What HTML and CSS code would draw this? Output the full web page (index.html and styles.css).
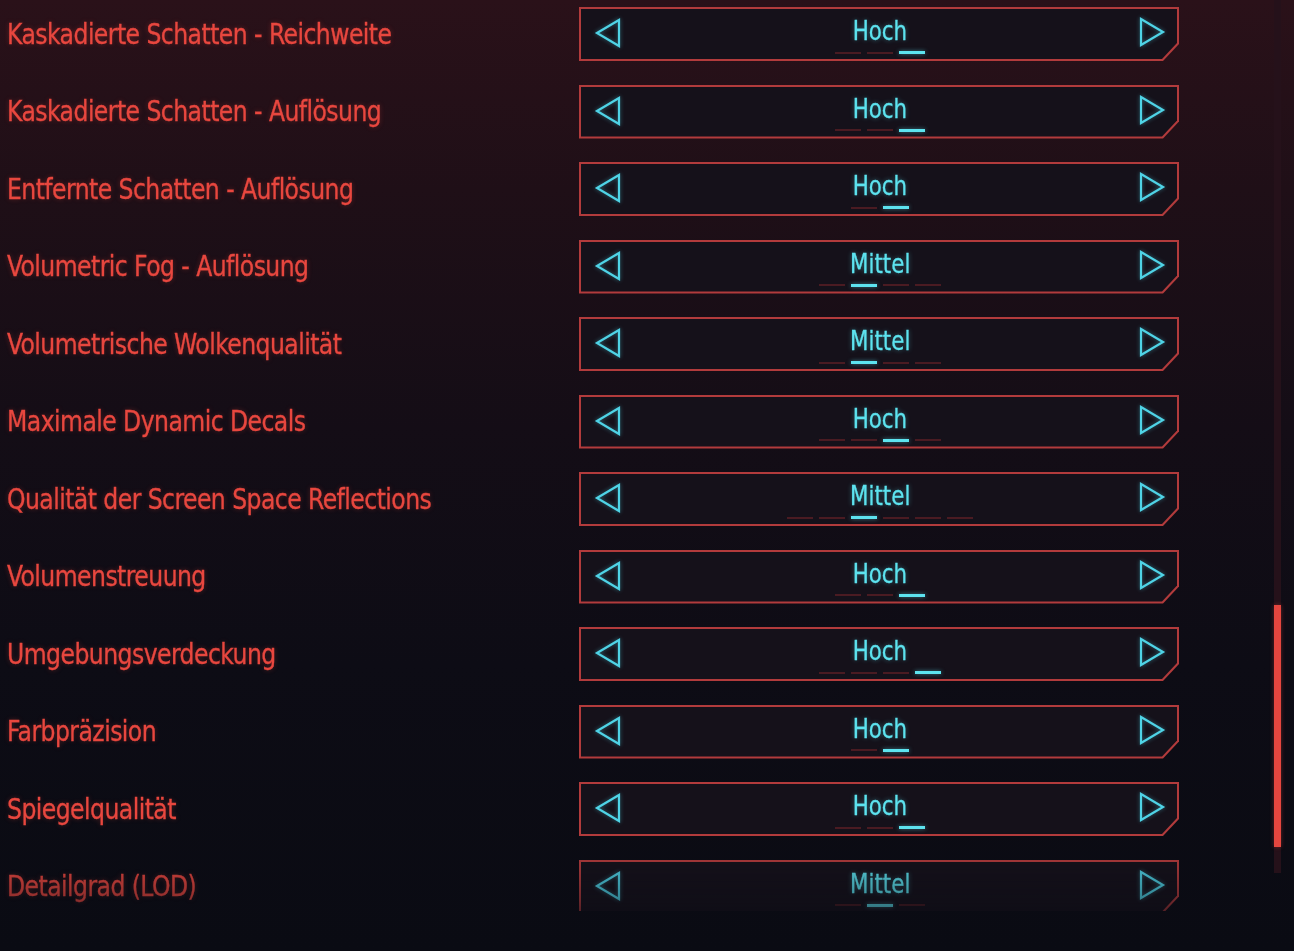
FILE: index.html
```html
<!DOCTYPE html>
<html lang="de">
<head>
<meta charset="utf-8">
<title>Grafik-Einstellungen</title>
<link rel="stylesheet" href="styles.css">
</head>
<body>
<div class="page">
  <div class="list">
    <div class="row"><div class="label"><span>Kaskadierte Schatten - Reichweite</span></div>
      <div class="sel"><div class="sel-inner">
        <svg class="arrow" viewBox="0 0 28 30"><polygon points="3,15 25,2 25,28"/></svg>
        <div class="val"><span class="txt">Hoch</span><div class="ind"><i></i><i></i><i class="on"></i></div></div>
        <svg class="arrow" viewBox="0 0 28 30"><polygon points="3,2 25,15 3,28"/></svg>
      </div></div></div>
    <div class="row"><div class="label"><span>Kaskadierte Schatten - Auflösung</span></div>
      <div class="sel"><div class="sel-inner">
        <svg class="arrow" viewBox="0 0 28 30"><polygon points="3,15 25,2 25,28"/></svg>
        <div class="val"><span class="txt">Hoch</span><div class="ind"><i></i><i></i><i class="on"></i></div></div>
        <svg class="arrow" viewBox="0 0 28 30"><polygon points="3,2 25,15 3,28"/></svg>
      </div></div></div>
    <div class="row"><div class="label"><span>Entfernte Schatten - Auflösung</span></div>
      <div class="sel"><div class="sel-inner">
        <svg class="arrow" viewBox="0 0 28 30"><polygon points="3,15 25,2 25,28"/></svg>
        <div class="val"><span class="txt">Hoch</span><div class="ind"><i></i><i class="on"></i></div></div>
        <svg class="arrow" viewBox="0 0 28 30"><polygon points="3,2 25,15 3,28"/></svg>
      </div></div></div>
    <div class="row"><div class="label"><span>Volumetric Fog - Auflösung</span></div>
      <div class="sel"><div class="sel-inner">
        <svg class="arrow" viewBox="0 0 28 30"><polygon points="3,15 25,2 25,28"/></svg>
        <div class="val"><span class="txt">Mittel</span><div class="ind"><i></i><i class="on"></i><i></i><i></i></div></div>
        <svg class="arrow" viewBox="0 0 28 30"><polygon points="3,2 25,15 3,28"/></svg>
      </div></div></div>
    <div class="row"><div class="label"><span>Volumetrische Wolkenqualität</span></div>
      <div class="sel"><div class="sel-inner">
        <svg class="arrow" viewBox="0 0 28 30"><polygon points="3,15 25,2 25,28"/></svg>
        <div class="val"><span class="txt">Mittel</span><div class="ind"><i></i><i class="on"></i><i></i><i></i></div></div>
        <svg class="arrow" viewBox="0 0 28 30"><polygon points="3,2 25,15 3,28"/></svg>
      </div></div></div>
    <div class="row"><div class="label"><span>Maximale Dynamic Decals</span></div>
      <div class="sel"><div class="sel-inner">
        <svg class="arrow" viewBox="0 0 28 30"><polygon points="3,15 25,2 25,28"/></svg>
        <div class="val"><span class="txt">Hoch</span><div class="ind"><i></i><i></i><i class="on"></i><i></i></div></div>
        <svg class="arrow" viewBox="0 0 28 30"><polygon points="3,2 25,15 3,28"/></svg>
      </div></div></div>
    <div class="row"><div class="label"><span>Qualität der Screen Space Reflections</span></div>
      <div class="sel"><div class="sel-inner">
        <svg class="arrow" viewBox="0 0 28 30"><polygon points="3,15 25,2 25,28"/></svg>
        <div class="val"><span class="txt">Mittel</span><div class="ind"><i></i><i></i><i class="on"></i><i></i><i></i><i></i></div></div>
        <svg class="arrow" viewBox="0 0 28 30"><polygon points="3,2 25,15 3,28"/></svg>
      </div></div></div>
    <div class="row"><div class="label"><span>Volumenstreuung</span></div>
      <div class="sel"><div class="sel-inner">
        <svg class="arrow" viewBox="0 0 28 30"><polygon points="3,15 25,2 25,28"/></svg>
        <div class="val"><span class="txt">Hoch</span><div class="ind"><i></i><i></i><i class="on"></i></div></div>
        <svg class="arrow" viewBox="0 0 28 30"><polygon points="3,2 25,15 3,28"/></svg>
      </div></div></div>
    <div class="row"><div class="label"><span>Umgebungsverdeckung</span></div>
      <div class="sel"><div class="sel-inner">
        <svg class="arrow" viewBox="0 0 28 30"><polygon points="3,15 25,2 25,28"/></svg>
        <div class="val"><span class="txt">Hoch</span><div class="ind"><i></i><i></i><i></i><i class="on"></i></div></div>
        <svg class="arrow" viewBox="0 0 28 30"><polygon points="3,2 25,15 3,28"/></svg>
      </div></div></div>
    <div class="row"><div class="label"><span>Farbpräzision</span></div>
      <div class="sel"><div class="sel-inner">
        <svg class="arrow" viewBox="0 0 28 30"><polygon points="3,15 25,2 25,28"/></svg>
        <div class="val"><span class="txt">Hoch</span><div class="ind"><i></i><i class="on"></i></div></div>
        <svg class="arrow" viewBox="0 0 28 30"><polygon points="3,2 25,15 3,28"/></svg>
      </div></div></div>
    <div class="row"><div class="label"><span>Spiegelqualität</span></div>
      <div class="sel"><div class="sel-inner">
        <svg class="arrow" viewBox="0 0 28 30"><polygon points="3,15 25,2 25,28"/></svg>
        <div class="val"><span class="txt">Hoch</span><div class="ind"><i></i><i></i><i class="on"></i></div></div>
        <svg class="arrow" viewBox="0 0 28 30"><polygon points="3,2 25,15 3,28"/></svg>
      </div></div></div>
    <div class="row"><div class="label"><span>Detailgrad (LOD)</span></div>
      <div class="sel"><div class="sel-inner">
        <svg class="arrow" viewBox="0 0 28 30"><polygon points="3,15 25,2 25,28"/></svg>
        <div class="val"><span class="txt">Mittel</span><div class="ind"><i></i><i class="on"></i><i></i></div></div>
        <svg class="arrow" viewBox="0 0 28 30"><polygon points="3,2 25,15 3,28"/></svg>
      </div></div></div>
  </div>
  <div class="scrollbar"><div class="thumb"></div></div>
</div>
</body>
</html>
```
FILE: styles.css
```css
* { box-sizing: border-box; }
html, body { margin: 0; padding: 0; }
body {
  width: 1294px;
  height: 951px;
  overflow: hidden;
  background: linear-gradient(180deg, #2a1119 0%, #1f0f17 20%, #140d16 45%, #0d0c15 70%, #0a0b13 100%);
  font-family: "DejaVu Sans Condensed", "Liberation Sans", sans-serif;
}
.page {
  display: flex;
  align-items: flex-start;
}
.list {
  flex: 0 0 1180px;
  height: 911px;
  overflow: hidden;
  padding: 7px 0 0 7px;
  display: flex;
  flex-direction: column;
  gap: 23.5px;
  -webkit-mask-image: linear-gradient(180deg, #000 0, #000 845px, rgba(0,0,0,.6) 900px, rgba(0,0,0,.45) 911px);
  mask-image: linear-gradient(180deg, #000 0, #000 845px, rgba(0,0,0,.6) 900px, rgba(0,0,0,.45) 911px);
}
.row {
  display: flex;
  align-items: center;
  flex: 0 0 54px;
}
.label {
  flex: 0 0 572px;
  color: #e8473f;
  font-size: 28px;
  line-height: 34px;
  letter-spacing: -0.6px;
  text-shadow: 0 0 6px rgba(232, 71, 63, 0.35);
  padding-top: 1px;
}
.label span {
  display: inline-block;
  transform: scaleX(0.935);
  transform-origin: 0 50%;
  -webkit-text-stroke: 0.3px #e8473f;
}
.sel {
  flex: 0 0 600px;
  height: 54px;
  background: #b23b3c;
  padding: 2px;
  clip-path: polygon(0 0, 100% 0, 100% calc(100% - 17px), calc(100% - 16px) 100%, 0 100%);
}
.sel-inner {
  height: 100%;
  background: #15111a;
  clip-path: polygon(0 0, 100% 0, 100% calc(100% - 16px), calc(100% - 15px) 100%, 0 100%);
  display: grid;
  grid-template-columns: 28px 1fr 28px;
  align-items: center;
  padding: 0 11px 0 13px;
}
.arrow {
  width: 28px;
  height: 30px;
  display: block;
  fill: none;
  stroke: #4fd3e6;
  stroke-width: 2.2;
  stroke-linejoin: miter;
  filter: drop-shadow(0 0 2px rgba(79, 211, 230, 0.45));
}
.arrow:first-child { margin-top: -2px; }
.arrow:last-child { margin-top: -4px; }
.val {
  display: flex;
  flex-direction: column;
  align-items: center;
  align-self: stretch;
  padding-top: 7px;
}
.txt {
  display: block;
  color: #5de3ef;
  font-size: 27px;
  line-height: 30px;
  transform: scaleX(0.88);
  -webkit-text-stroke: 0.3px #5de3ef;
  text-shadow: 0 0 6px rgba(93, 227, 239, 0.45);
}
.ind {
  display: flex;
  gap: 6px;
  margin-top: 5px;
  align-items: center;
}
.ind i {
  display: block;
  width: 26px;
  height: 2px;
  background: #4a1b22;
}
.ind i.on {
  height: 3px;
  background: #5de3ef;
  box-shadow: 0 0 4px rgba(93, 227, 239, 0.5);
}
.scrollbar {
  flex: 0 0 7px;
  margin-left: 94px;
  height: 873px;
  background: #25111a;
  padding-top: 605px;
}
.thumb {
  height: 242px;
  background: #e5463f;
  box-shadow: 0 0 4px rgba(229, 70, 63, 0.4);
}
```
